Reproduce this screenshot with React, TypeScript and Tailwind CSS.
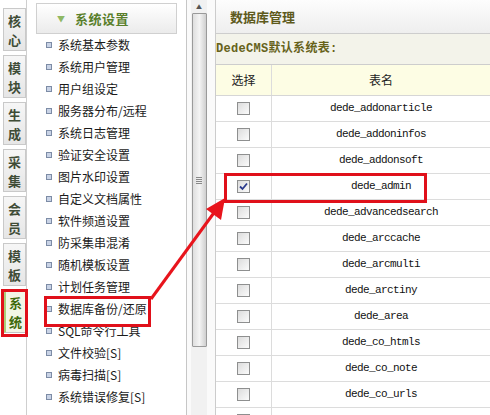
const tabs = ["核心", "模块", "生成", "采集", "会员", "模板", "系统"];

const menu = [
	"系统基本参数",
	"系统用户管理",
	"用户组设定",
	"服务器分布/远程",
	"系统日志管理",
	"验证安全设置",
	"图片水印设置",
	"自定义文档属性",
	"软件频道设置",
	"防采集串混淆",
	"随机模板设置",
	"计划任务管理",
	"数据库备份/还原",
	"SQL命令行工具",
	"文件校验[S]",
	"病毒扫描[S]",
	"系统错误修复[S]",
];

const tables = [
	"dede_addonarticle",
	"dede_addoninfos",
	"dede_addonsoft",
	"dede_admin",
	"dede_advancedsearch",
	"dede_arccache",
	"dede_arcmulti",
	"dede_arctiny",
	"dede_area",
	"dede_co_htmls",
	"dede_co_note",
	"dede_co_urls",
	"",
];

function Checkbox({ checked }: { checked?: boolean }) {
	return (
		<div className="w-[13px] h-[13px] border border-[#8e8f8f] bg-gradient-to-br from-[#dcdcdc] to-[#fbfbfb] flex items-center justify-center">
			{checked && (
				<svg width="9" height="9" viewBox="0 0 9 9">
					<path d="M1 4.5 L3.5 7 L8 1.5" fill="none" stroke="#2a3a8c" strokeWidth="1.8" />
				</svg>
			)}
		</div>
	);
}

export default function App() {
	return (
		<div className="relative w-[490px] h-[415px] overflow-hidden bg-white flex font-['Noto_Sans_CJK_SC',sans-serif]">
			{/* tabs */}
			<div className="w-[27px] shrink-0 border-r border-[#cfcfcf] flex flex-col gap-[4px] pt-[8px] pl-[3px]">
				{tabs.map((t, i) => {
					const active = i === tabs.length - 1;
					return (
						<div
							key={t}
							className={
								active
									? "w-[23px] h-[43px] border border-[#c4c4c4] border-l-[3px] border-l-[#a9cf7a] bg-[#f3f6e6] flex flex-col items-center justify-center text-[13px] leading-[19px] font-bold text-[#3f6a0c]"
									: "w-[23px] h-[43px] border border-[#c9c9c9] bg-gradient-to-b from-[#f6f6f6] to-[#e6e6e6] flex flex-col items-center justify-center text-[13px] leading-[19px] font-bold text-[#3f4c36]"
							}
						>
							<span className="block h-[19px]">{t[0]}</span>
							<span className="block h-[19px]">{t[1]}</span>
						</div>
					);
				})}
			</div>

			{/* menu */}
			<div className="w-[160px] shrink-0 border-r border-[#c6c6c6] pt-[3px]">
				<div className="mx-[9px] h-[31px] border border-[#d0d0d0] bg-gradient-to-b from-[#ffffff] to-[#ebebeb] flex items-center pl-[20px] gap-[10px]">
					<span className="text-[8px] text-[#8fb864]">▼</span>
					<span className="text-[13px] font-bold text-[#5a7f2c] tracking-[0.5px]">系统设置</span>
				</div>
				<ul>
					{menu.map((m) => (
						<li key={m} className="h-[22px] flex items-center pl-[19px] gap-[6px] text-[12px] text-[#1a1a1a]">
							<span className="w-[6px] h-[6px] border border-[#7d8ca6] bg-[#c9d3e6]" />
							<span>{m}</span>
						</li>
					))}
				</ul>
			</div>

			{/* scrollbar */}
			<div className="w-[29px] shrink-0 border-r border-[#cccccc] bg-[#fafafa] flex pl-[4px]">
				<div className="w-[16px] h-full bg-[#f1f1f1] flex flex-col items-center">
					<div className="h-[13px] flex items-center justify-center text-[6px] text-[#555]">▲</div>
					<div className="w-[15px] h-[334px] border border-[#9a9a9a] rounded-[1px] bg-gradient-to-r from-[#dedede] via-[#f4f4f4] to-[#cfcfcf] flex items-center justify-center">
						<div className="flex flex-col gap-[1px]">
							<div className="w-[6px] h-[1px] bg-[#888]" />
							<div className="w-[6px] h-[1px] bg-[#888]" />
							<div className="w-[6px] h-[1px] bg-[#888]" />
							<div className="w-[6px] h-[1px] bg-[#888]" />
						</div>
					</div>
				</div>
			</div>

			{/* content */}
			<div className="flex-1 min-w-0">
				<div className="h-[34px] border-b border-[#cdcdcd] bg-gradient-to-b from-[#fdfdfd] to-[#eeeeee] flex items-center pl-[14px] text-[13px] font-bold text-[#5e5a1c]">
					数据库管理
				</div>
				<div className="h-[31px] border-b border-[#cdcdcd] bg-[#f3f3ea] flex items-center text-[12px] font-bold text-[#66621a] font-['Liberation_Mono','Noto_Sans_CJK_SC',monospace] tracking-[0.3px]">
					DedeCMS默认系统表:
				</div>
				<div className="h-[31px] border-b border-[#d6d6d6] bg-[#fdfde4] flex text-[12px] text-[#222]">
					<div className="w-[56px] border-r border-[#dcdcdc] flex items-center justify-center">选择</div>
					<div className="flex-1 flex items-center justify-center">表名</div>
				</div>
				{tables.map((t, i) => (
					<div key={i} className="h-[26px] border-b border-[#dcdcdc] flex">
						<div className="w-[56px] border-r border-[#dcdcdc] flex items-center justify-center">
							<Checkbox checked={i === 3} />
						</div>
						<div className="flex-1 flex items-center justify-center text-[11px] tracking-[-0.6px] text-[#111] font-['Liberation_Mono',monospace]">
							{t}
						</div>
					</div>
				))}
			</div>

			{/* annotations */}
			<div className="absolute left-[1px] top-[289px] w-[27px] h-[48px] border-[3px] border-[#e0101a]" />
			<div className="absolute left-[44px] top-[296px] w-[107px] h-[31px] border-[3px] border-[#e0101a]" />
			<div className="absolute left-[224px] top-[173px] w-[203px] h-[30px] border-[3px] border-[#e0101a]" />
			<svg className="absolute left-0 top-0 pointer-events-none" width="490" height="415">
				<line x1="151" y1="299" x2="216" y2="210" stroke="#e8141c" strokeWidth="3" />
				<polygon points="225,198 221,220 206,209" fill="#e8141c" />
			</svg>
		</div>
	);
}
